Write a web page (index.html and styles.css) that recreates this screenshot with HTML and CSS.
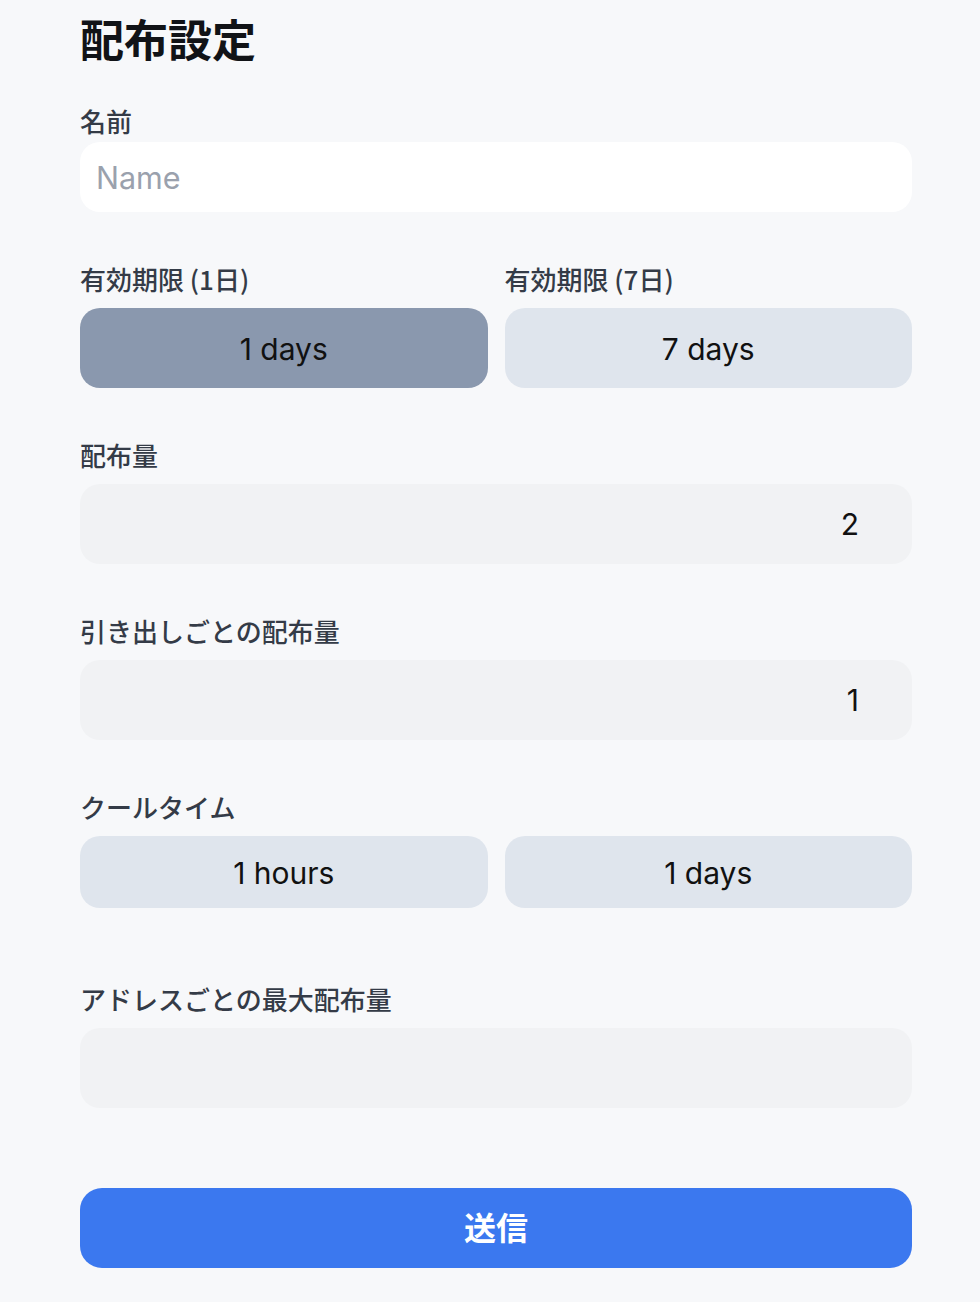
FILE: index.html
```html
<!DOCTYPE html>
<html lang="ja">

<head>
  <meta charset="UTF-8" />
  <meta name="viewport" content="width=device-width, initial-scale=1.0" />
  <title>配布設定</title>
  <link rel="stylesheet" href="styles.css">
</head>

<body>
  <div class="container">
    <h1 class="title">配布設定</h1>
    <form class="form" action="">
      <div class="field field-name">
        <label for="name">名前</label>
        <input class="text-input name-input" type="text" id="name" placeholder="Name" />
      </div>

      <div class="field">
        <div class="pair">
          <div class="pair-item">
            <label>有効期限 (1日)</label>
            <button type="button" class="choice selected">1 days</button>
          </div>
          <div class="pair-item">
            <label>有効期限 (7日)</label>
            <button type="button" class="choice">7 days</button>
          </div>
        </div>
      </div>

      <div class="field">
        <label for="amount">配布量</label>
        <input class="text-input num-input" type="text" inputmode="numeric" id="amount" value="2" />
      </div>

      <div class="field">
        <label for="perdraw">引き出しごとの配布量</label>
        <input class="text-input num-input" type="text" inputmode="numeric" id="perdraw" value="1" />
      </div>

      <div class="field">
        <label>クールタイム</label>
        <div class="pair">
          <button type="button" class="choice short">1 hours</button>
          <button type="button" class="choice short">1 days</button>
        </div>
      </div>

      <div class="field field-max">
        <label for="maxamount">アドレスごとの最大配布量</label>
        <input class="text-input num-input" type="text" inputmode="numeric" id="maxamount" />
      </div>

      <button type="button" class="submit">送信</button>
    </form>
  </div>
</body>

</html>
```

FILE: styles.css
```css
body {
  margin: 0;
  background-color: #f7f8fa;
  font-family: Inter, "Noto Sans CJK JP", sans-serif;
}

.container {
  width: 832px;
  padding: 12px 0 0 80px;
}

.title {
  margin: 0;
  font-size: 44px;
  line-height: 53px;
  font-weight: 700;
  color: #111317;
  font-family: "Noto Sans CJK JP", sans-serif;
}

.form {
  display: flex;
  flex-direction: column;
}

label {
  display: block;
  font-family: "Noto Sans CJK JP", sans-serif;
  font-size: 26px;
  line-height: 32px;
  font-weight: 500;
  color: #343b47;
  margin-bottom: 13px;
}

.field {
  margin-top: 51px;
}

.field-name {
  margin-top: 40px;
}

.field-name label {
  margin-bottom: 5px;
}

.field-max {
  margin-top: 75px;
}

.text-input {
  display: block;
  box-sizing: border-box;
  width: 100%;
  height: 80px;
  border: none;
  outline: none;
  border-radius: 20px;
  background-color: #f1f2f4;
  font-family: Inter, sans-serif;
  font-size: 30px;
  color: #111;
}

.name-input {
  height: 70px;
  background-color: #ffffff;
  padding: 0 16px;
  font-size: 30.5px;
}

.name-input::placeholder {
  color: #9aa1ad;
}

.num-input {
  text-align: right;
  padding: 0 53px 0 16px;
}

.pair {
  display: flex;
  gap: 17px;
}

.pair-item {
  flex: 1;
}

.choice {
  display: block;
  flex: 1;
  width: 100%;
  height: 80px;
  border: none;
  border-radius: 20px;
  background-color: #dfe5ed;
  font-family: Inter, sans-serif;
  font-size: 30px;
  color: #111;
  padding-top: 2px;
}

.choice.selected {
  background-color: #8a98ae;
}

.choice.short {
  height: 72px;
}

.submit {
  margin-top: 80px;
  height: 80px;
  border: none;
  border-radius: 22px;
  background-color: #3b78ef;
  color: #ffffff;
  font-family: "Noto Sans CJK JP", sans-serif;
  font-size: 32px;
  font-weight: 700;
  padding-bottom: 5px;
}
```
